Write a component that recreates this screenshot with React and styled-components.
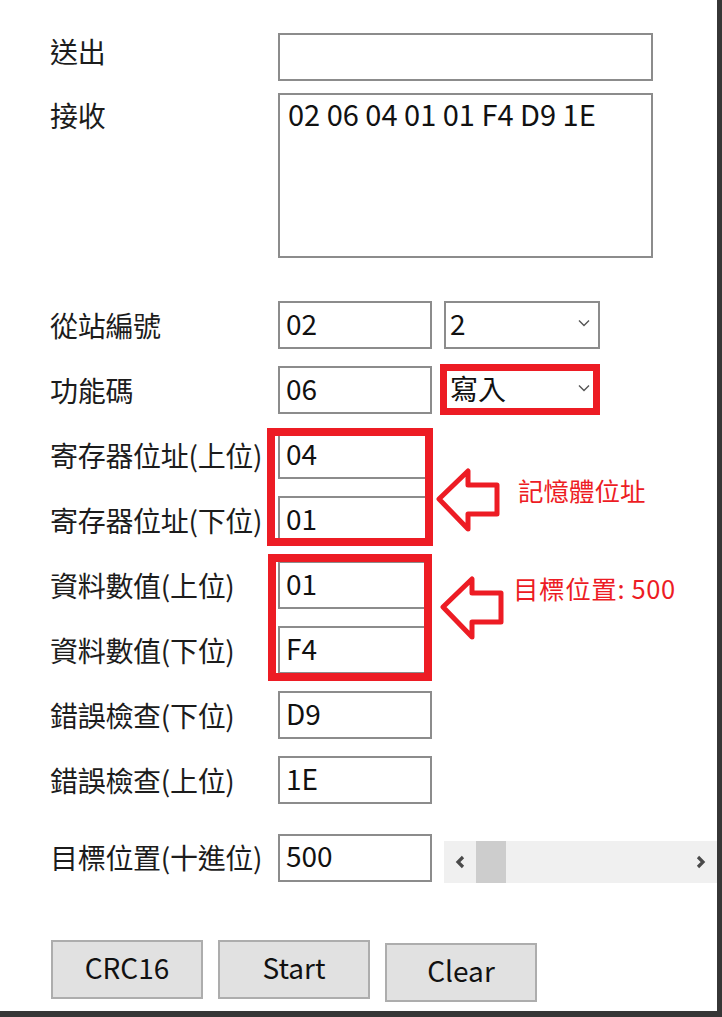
import styled, { createGlobalStyle } from 'styled-components';

const GlobalStyle = createGlobalStyle`
    * { box-sizing: border-box; }
    body {
        margin: 0;
        background: #fff;
        font-family: "Noto Sans CJK TC", "Noto Sans", sans-serif;
    }
`;

const RED = '#ed1c24';
const FONT = `"Noto Sans CJK TC", "Noto Sans", sans-serif`;

const Page = styled.div`
    position: relative;
    width: 722px;
    height: 1017px;
    background: #fff;
    border-right: 5px solid #363636;
    border-bottom: 6px solid #363636;
    padding: 33px 0 0 50px;
    color: #1c1c1c;
`;

const Form = styled.div`
    display: flex;
    flex-direction: column;
`;

const Row = styled.div`
    display: grid;
    grid-template-columns: 216px 154px 1fr;
    column-gap: 12px;
    align-items: center;
    margin-top: ${p => p.$gap || 0}px;
`;

const TopRow = styled.div`
    display: grid;
    grid-template-columns: 228px 375px;
    align-items: start;
    margin-top: ${p => p.$gap || 0}px;
`;

const Label = styled.div`
    font-size: 28px;
    line-height: 1.15;
    letter-spacing: -0.3px;
    white-space: nowrap;
    padding-top: ${p => p.$top || 0}px;
`;

const Field = styled.input`
    width: 100%;
    height: 48px;
    border: 2px solid #8c8c8c;
    padding: 0 6px 5px;
    font-family: ${FONT};
    font-size: 28px;
    color: #111;
    background: #fff;
    outline: none;
`;

const TextArea = styled.textarea`
    display: block;
    width: 100%;
    height: ${p => p.$h}px;
    border: 2px solid #8c8c8c;
    padding: 0 8px;
    font-family: ${FONT};
    font-size: 29px;
    line-height: 1.3;
    color: #111;
    resize: none;
    outline: none;
    overflow: hidden;
`;

const Combo = styled.div`
    width: 156px;
    height: 48px;
    border: 2px solid #8c8c8c;
    display: flex;
    align-items: center;
    justify-content: space-between;
    padding: 0 8px 5px 4px;
    font-size: 28px;
    color: #111;
    background: #fff;
`;

const Chevron = () => (
    <svg width="12" height="8" viewBox="0 0 12 8">
        <path d="M1 1.5 L6 6.5 L11 1.5" fill="none" stroke="#555" strokeWidth="1.4" />
    </svg>
);

const Scroll = styled.div`
    height: 42px;
    margin-top: 9px;
    background: #f0f0f0;
    display: flex;
    align-items: stretch;
`;

const ScrollArrow = styled.div`
    width: 32px;
    display: flex;
    align-items: center;
    justify-content: center;
`;

const Thumb = styled.div`
    width: 30px;
    background: #cdcdcd;
`;

const Track = styled.div`
    flex: 1;
`;

const ButtonBar = styled.div`
    display: flex;
    gap: 15px;
    margin-top: 57px;
    padding-left: 1px;
`;

const Button = styled.button`
    width: 152px;
    height: 59px;
    margin-top: ${p => p.$shift || 0}px;
    background: #e1e1e1;
    border: 2px solid #adadad;
    font-family: ${FONT};
    font-size: 28px;
    color: #111;
    padding: 0 0 6px;
`;

const Highlight = styled.div`
    position: absolute;
    left: ${p => p.$x}px;
    top: ${p => p.$y}px;
    width: ${p => p.$w}px;
    height: ${p => p.$h}px;
    border: ${p => p.$t}px solid ${RED};
    pointer-events: none;
`;

const Pointer = styled.svg`
    position: absolute;
    left: ${p => p.$x}px;
    top: ${p => p.$y}px;
`;

const Note = styled.div`
    position: absolute;
    left: ${p => p.$x}px;
    top: ${p => p.$y}px;
    font-size: 25.5px;
    line-height: 1.2;
    letter-spacing: ${p => p.$ls || 0}px;
    color: ${RED};
    white-space: nowrap;
`;

const Arrow = ({ x, y }) => (
    <Pointer $x={x} $y={y} width="66" height="66" viewBox="0 0 66 66">
        <path
            d="M3 31 L32 3 L32 17 L61 17 L61 46 L32 46 L32 61 Z"
            fill="none"
            stroke={RED}
            strokeWidth="5"
            strokeLinejoin="round"
        />
    </Pointer>
);

const LeftArrow = () => (
    <svg width="12" height="16" viewBox="0 0 12 16">
        <path d="M9 3 L4 8 L9 13" fill="none" stroke="#4a4a4a" strokeWidth="3.2" />
    </svg>
);

const RightArrow = () => (
    <svg width="12" height="16" viewBox="0 0 12 16">
        <path d="M3 3 L8 8 L3 13" fill="none" stroke="#4a4a4a" strokeWidth="3.2" />
    </svg>
);

const fields = [
    { label: '寄存器位址(上位)', value: '04' },
    { label: '寄存器位址(下位)', value: '01' },
    { label: '資料數值(上位)', value: '01' },
    { label: '資料數值(下位)', value: 'F4' },
    { label: '錯誤檢查(下位)', value: 'D9' },
    { label: '錯誤檢查(上位)', value: '1E' },
];

const App = () => {
    return (
        <Page>
            <GlobalStyle />
            <Form>
                <TopRow>
                    <Label $top={2}>送出</Label>
                    <TextArea $h={48} readOnly defaultValue="" />
                </TopRow>
                <TopRow $gap={12}>
                    <Label $top={6}>接收</Label>
                    <TextArea $h={165} readOnly defaultValue="02 06 04 01 01 F4 D9 1E" />
                </TopRow>
                <Row $gap={43}>
                    <Label>從站編號</Label>
                    <Field readOnly value="02" />
                    <Combo>2<Chevron /></Combo>
                </Row>
                <Row $gap={17}>
                    <Label>功能碼</Label>
                    <Field readOnly value="06" />
                    <Combo>寫入<Chevron /></Combo>
                </Row>
                {fields.map(f => (
                    <Row $gap={17} key={f.label}>
                        <Label>{f.label}</Label>
                        <Field readOnly value={f.value} />
                    </Row>
                ))}
                <Row $gap={28}>
                    <Label>目標位置(十進位)</Label>
                    <Field readOnly value="500" />
                    <Scroll>
                        <ScrollArrow><LeftArrow /></ScrollArrow>
                        <Thumb />
                        <Track />
                        <ScrollArrow><RightArrow /></ScrollArrow>
                    </Scroll>
                </Row>
            </Form>
            <ButtonBar>
                <Button>CRC16</Button>
                <Button>Start</Button>
                <Button $shift={3}>Clear</Button>
            </ButtonBar>

            <Highlight $x={440} $y={364} $w={160} $h={51} $t={7} />
            <Highlight $x={267} $y={428} $w={166} $h={118} $t={8} />
            <Highlight $x={268} $y={554} $w={164} $h={127} $t={8} />
            <Arrow x={436} y={468} />
            <Arrow x={440} y={576} />
            <Note $x={518} $y={475}>記憶體位址</Note>
            <Note $x={513} $y={573} $ls={0.6}>目標位置: 500</Note>
        </Page>
    );
};

export default App;
